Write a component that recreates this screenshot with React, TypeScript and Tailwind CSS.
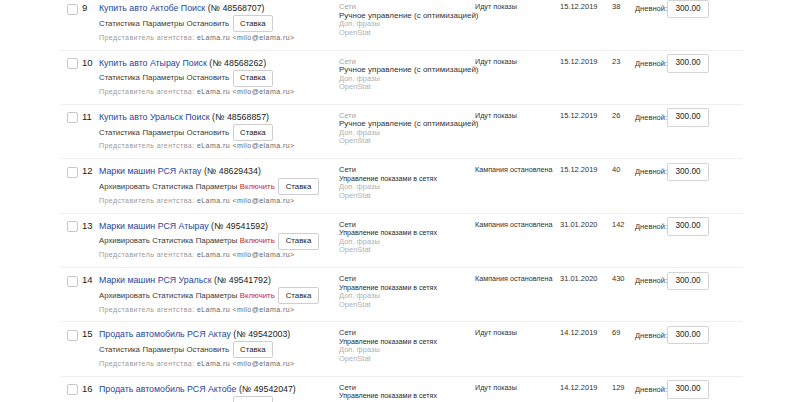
import React from "react";

type Row = {
  n: number;
  title: string;
  id: string;
  links: { t: string; red?: boolean }[];
  rsya: boolean;
  status: string;
  date: string;
  count: string;
};

const manualLinks = [{ t: "Статистика" }, { t: "Параметры" }, { t: "Остановить" }];
const stoppedLinks = [{ t: "Архивировать" }, { t: "Статистика" }, { t: "Параметры" }, { t: "Включить", red: true }];

const rows: Row[] = [
  { n: 9, title: "Купить авто Актобе Поиск", id: "48568707", links: manualLinks, rsya: false, status: "Идут показы", date: "15.12.2019", count: "38" },
  { n: 10, title: "Купить авто Атырау Поиск", id: "48568262", links: manualLinks, rsya: false, status: "Идут показы", date: "15.12.2019", count: "23" },
  { n: 11, title: "Купить авто Уральск Поиск", id: "48568857", links: manualLinks, rsya: false, status: "Идут показы", date: "15.12.2019", count: "26" },
  { n: 12, title: "Марки машин РСЯ Актау", id: "48629434", links: stoppedLinks, rsya: true, status: "Кампания остановлена", date: "15.12.2019", count: "40" },
  { n: 13, title: "Марки машин РСЯ Атырау", id: "49541592", links: stoppedLinks, rsya: true, status: "Кампания остановлена", date: "31.01.2020", count: "142" },
  { n: 14, title: "Марки машин РСЯ Уральск", id: "49541792", links: stoppedLinks, rsya: true, status: "Кампания остановлена", date: "31.01.2020", count: "430" },
  { n: 15, title: "Продать автомобиль РСЯ Актау", id: "49542003", links: manualLinks, rsya: true, status: "Идут показы", date: "14.12.2019", count: "69" },
  { n: 16, title: "Продать автомобиль РСЯ Актобе", id: "49542047", links: manualLinks, rsya: true, status: "Идут показы", date: "14.12.2019", count: "129" },
];

function CampaignRow({ r }: { r: Row }) {
  return (
    <div className="flex items-start h-[54.4px] shrink-0 border-b border-[#efefef] w-[683px] ml-[60px]">
      <div className="mt-[7.5px] ml-[7px] w-[11px] h-[11px] rounded-[2px] border border-[#c8c8c8] bg-white shrink-0" />
      <div className="ml-[4px] w-[17px] pt-[5px] text-[9.5px] leading-[14px] text-[#222] shrink-0">{r.n}</div>
      <div className="w-[240px] shrink-0 pt-[5px] flex flex-col">
        <div className="text-[8.8px] leading-[14px] whitespace-nowrap">
          <span className="text-[#2446a6]">{r.title}</span>
          <span className="text-[#222]"> (№ {r.id})</span>
        </div>
        <div className="flex items-center h-[17px] text-[7.8px] whitespace-nowrap">
          {r.links.map((l, i) => (
            <span key={i} className={`mr-[2.5px] ${l.red ? "text-[#cc1f1f]" : "text-[#3a3a3a]"}`}>{l.t}</span>
          ))}
          <span className="ml-[1px] h-[17px] px-[6.5px] flex items-center border border-[#cfcfcf] rounded-[2px] bg-white text-[7.8px] text-[#222]">Ставка</span>
        </div>
        <div className="mt-[0.5px] text-[7px] leading-[10px] tracking-[0.45px] whitespace-nowrap">
          <span className="text-[#9a9a9a]">Представитель агентства: </span>
          <span className="text-[#666]">eLama.ru &lt;milo@elama.ru&gt;</span>
        </div>
      </div>
      <div className="w-[136px] shrink-0 pt-[6px] flex flex-col text-[7.5px] whitespace-nowrap">
        <div className={`leading-[9.5px] ${r.rsya ? "text-[#333]" : "text-[#a5a5a5]"}`}>Сети</div>
        {r.rsya ? (
          <div className="leading-[8.5px] text-[#2a2a2a] text-[7.1px]">Управление показами в сетях</div>
        ) : (
          <div className="leading-[8.5px] text-[#333] text-[8px]">Ручное управление (с оптимизацией)</div>
        )}
        <div className="leading-[8.5px] text-[#b0b0b0]">Доп. фразы</div>
        <div className="leading-[8.5px] text-[#b0b0b0]">OpenStat</div>
      </div>
      <div className="w-[85px] shrink-0 pt-[6px] text-[7.2px] leading-[9px] text-[#333] whitespace-nowrap">{r.status}</div>
      <div className="w-[52px] shrink-0 pt-[6px] text-[7.5px] leading-[9px] text-[#333]">{r.date}</div>
      <div className="w-[23px] shrink-0 pt-[6px] text-[7.5px] leading-[9px] text-[#333]">{r.count}</div>
      <div className="flex items-center pt-[3.5px] shrink-0">
        <span className="text-[7.5px] text-[#333] w-[32px]">Дневной:</span>
        <div className="h-[18.5px] w-[42px] border border-[#d4d4d4] rounded-[2px] bg-white flex items-center justify-center text-[8.2px] text-[#222]">300.00</div>
      </div>
    </div>
  );
}

export default function App() {
  return (
    <div className="w-[807px] h-[402px] overflow-hidden bg-white" style={{ fontFamily: '"Liberation Sans", Arial, sans-serif' }}>
      <div className="flex flex-col -mt-[3.9px] pt-0">
        {rows.map((r) => (
          <CampaignRow key={r.n} r={r} />
        ))}
      </div>
    </div>
  );
}
